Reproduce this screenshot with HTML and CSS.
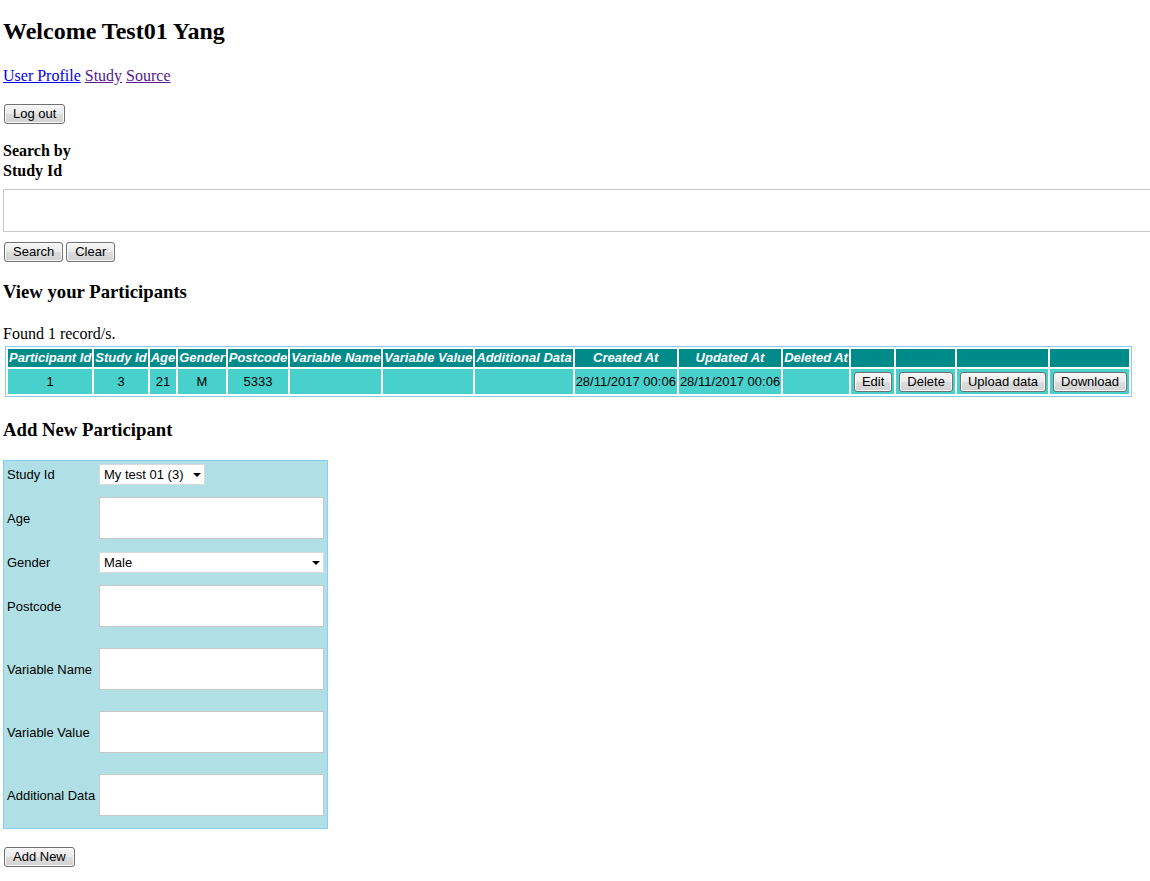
FILE: index.html
```html
<!DOCTYPE html>
<html>
<head>
<meta charset="utf-8">
<title>Participants</title>
<link rel="stylesheet" href="styles.css">
</head>
<body>
<h2 class="welcome">Welcome Test01 Yang</h2>
<p class="nav"><a href="#" class="link">User Profile</a> <a href="#" class="link visited">Study</a> <a href="#" class="link visited">Source</a></p>
<div class="btn-row logout-row"><button class="btn">Log out</button></div>
<label class="search-label" for="studyId">Search by Study Id</label>
<div class="search-field"><input id="studyId" class="search-input" type="text"></div>
<div class="btn-row search-row"><button class="btn">Search</button><button class="btn">Clear</button></div>
<h3 class="section-title first">View your Participants</h3>
<p class="found">Found 1 record/s.</p>
<table class="participants">
<thead>
<tr><th>Participant Id</th><th>Study Id</th><th>Age</th><th>Gender</th><th>Postcode</th><th>Variable Name</th><th>Variable Value</th><th>Additional Data</th><th>Created At</th><th>Updated At</th><th>Deleted At</th><th></th><th></th><th></th><th></th></tr>
</thead>
<tbody>
<tr><td>1</td><td>3</td><td>21</td><td>M</td><td>5333</td><td></td><td></td><td></td><td>28/11/2017 00:06</td><td>28/11/2017 00:06</td><td></td><td><button class="btn">Edit</button></td><td><button class="btn">Delete</button></td><td><button class="btn">Upload data</button></td><td><button class="btn">Download</button></td></tr>
</tbody>
</table>
<h3 class="section-title second">Add New Participant</h3>
<form class="add-form">
  <div class="form-row">
    <label class="form-label">Study Id</label>
    <span class="select-wrap short"><select class="form-select"><option>My test 01 (3)</option></select></span>
  </div>
  <div class="form-row">
    <label class="form-label">Age</label>
    <input class="form-input" type="text">
  </div>
  <div class="form-row gender">
    <label class="form-label">Gender</label>
    <span class="select-wrap wide"><select class="form-select"><option>Male</option><option>Female</option></select></span>
  </div>
  <div class="form-row">
    <label class="form-label">Postcode</label>
    <input class="form-input" type="text">
  </div>
  <div class="form-row spaced">
    <label class="form-label">Variable Name</label>
    <input class="form-input" type="text">
  </div>
  <div class="form-row spaced">
    <label class="form-label">Variable Value</label>
    <input class="form-input" type="text">
  </div>
  <div class="form-row spaced">
    <label class="form-label">Additional Data</label>
    <input class="form-input" type="text">
  </div>
</form>
<div class="btn-row add-row"><button class="btn">Add New</button></div>
</body>
</html>
```
FILE: styles.css
```css
html, body {
  margin: 0;
  padding: 0;
  background: #ffffff;
}
body {
  padding-left: 3px;
  font-family: "Liberation Serif", "Times New Roman", serif;
  font-size: 16px;
  color: #000;
}
.welcome {
  margin: 17px 0 0;
  font-size: 24px;
  line-height: 28px;
  font-weight: bold;
}
.nav {
  margin: 22px 0 0;
  line-height: 18px;
}
.link {
  color: #0000ee;
  text-decoration: underline;
}
.link.visited {
  color: #551a8b;
}
.btn-row {
  display: flex;
  gap: 3px;
  padding-left: 1px;
}
.logout-row { margin-top: 19px; }
.search-row { margin-top: 10px; }
.add-row { margin-top: 18px; }
.btn {
  box-sizing: border-box;
  height: 20px;
  margin: 0;
  padding: 0 8px;
  font-family: "Liberation Sans", Arial, sans-serif;
  font-size: 13px;
  line-height: 18px;
  color: #000;
  background: linear-gradient(#f6f6f6, #e9e9e9 50%, #dcdcdc 51%, #d2d2d2);
  border: 1px solid #707070;
  border-radius: 3px;
  box-shadow: inset 0 0 0 1px #fbfbfb;
  white-space: nowrap;
}
.search-label {
  display: block;
  width: 80px;
  margin-top: 17px;
  font-weight: bold;
  line-height: 20px;
}
.search-field {
  margin-top: 8px;
  overflow: hidden;
}
.search-input {
  display: block;
  box-sizing: border-box;
  width: calc(100% + 10px);
  height: 43px;
  margin: 0;
  border: 1px solid #c8c8c8;
  padding: 0 4px;
  background: #fff;
}
.section-title {
  margin: 0;
  font-size: 18.72px;
  line-height: 22px;
  font-weight: bold;
}
.section-title.first { margin-top: 19px; }
.section-title.second { margin-top: 22px; }
.found {
  margin: 22px 0 0;
  line-height: 18px;
}
.participants {
  margin: 3px 0 0 2px;
  border: 1px solid #87cefa;
  border-spacing: 2px;
  font-family: "Liberation Sans", Arial, sans-serif;
  font-size: 13px;
}
.participants th {
  background: #008b8b;
  color: #ffffff;
  font-style: italic;
  font-weight: bold;
  padding: 1px 1px;
  line-height: 16px;
  white-space: nowrap;
  text-align: center;
}
.participants td {
  background: #48d1cc;
  color: #000;
  padding: 1px 1px;
  line-height: 15px;
  text-align: center;
  vertical-align: middle;
  white-space: nowrap;
}
.participants td .btn {
  margin: 2px 1px 1px 2px;
  padding: 0 7px;
}
.add-form {
  box-sizing: border-box;
  width: 325px;
  margin: 19px 0 0;
  padding: 3px 3px 12px;
  background: #b0e0e6;
  border: 1px solid #87cefa;
  font-family: "Liberation Sans", Arial, sans-serif;
  font-size: 13px;
}
.form-row {
  display: flex;
  align-items: center;
  margin-top: 12px;
}
.form-row:first-child { margin-top: 0; }
.form-row.gender { margin-top: 13px; }
.form-row.spaced { margin-top: 21px; }
.form-label {
  width: 92px;
  flex: none;
  color: #000;
}
.form-input {
  box-sizing: border-box;
  width: 225px;
  height: 42px;
  margin: 0;
  border: 1px solid #c8c8c8;
  background: #fff;
}
.select-wrap {
  position: relative;
  display: inline-block;
  height: 21px;
}
.select-wrap::after {
  content: "";
  position: absolute;
  top: 9px;
  right: 4px;
  border-left: 4px solid transparent;
  border-right: 4px solid transparent;
  border-top: 4px solid #000;
  pointer-events: none;
}
.form-select {
  appearance: none;
  -webkit-appearance: none;
  display: block;
  box-sizing: border-box;
  height: 21px;
  margin: 0;
  padding: 0 4px;
  border: 1px solid #dadada;
  border-radius: 0;
  background: #fff;
  font-family: "Liberation Sans", Arial, sans-serif;
  font-size: 13px;
  color: #000;
}
.select-wrap.short .form-select { width: 106px; }
.select-wrap.wide .form-select { width: 225px; }
```
